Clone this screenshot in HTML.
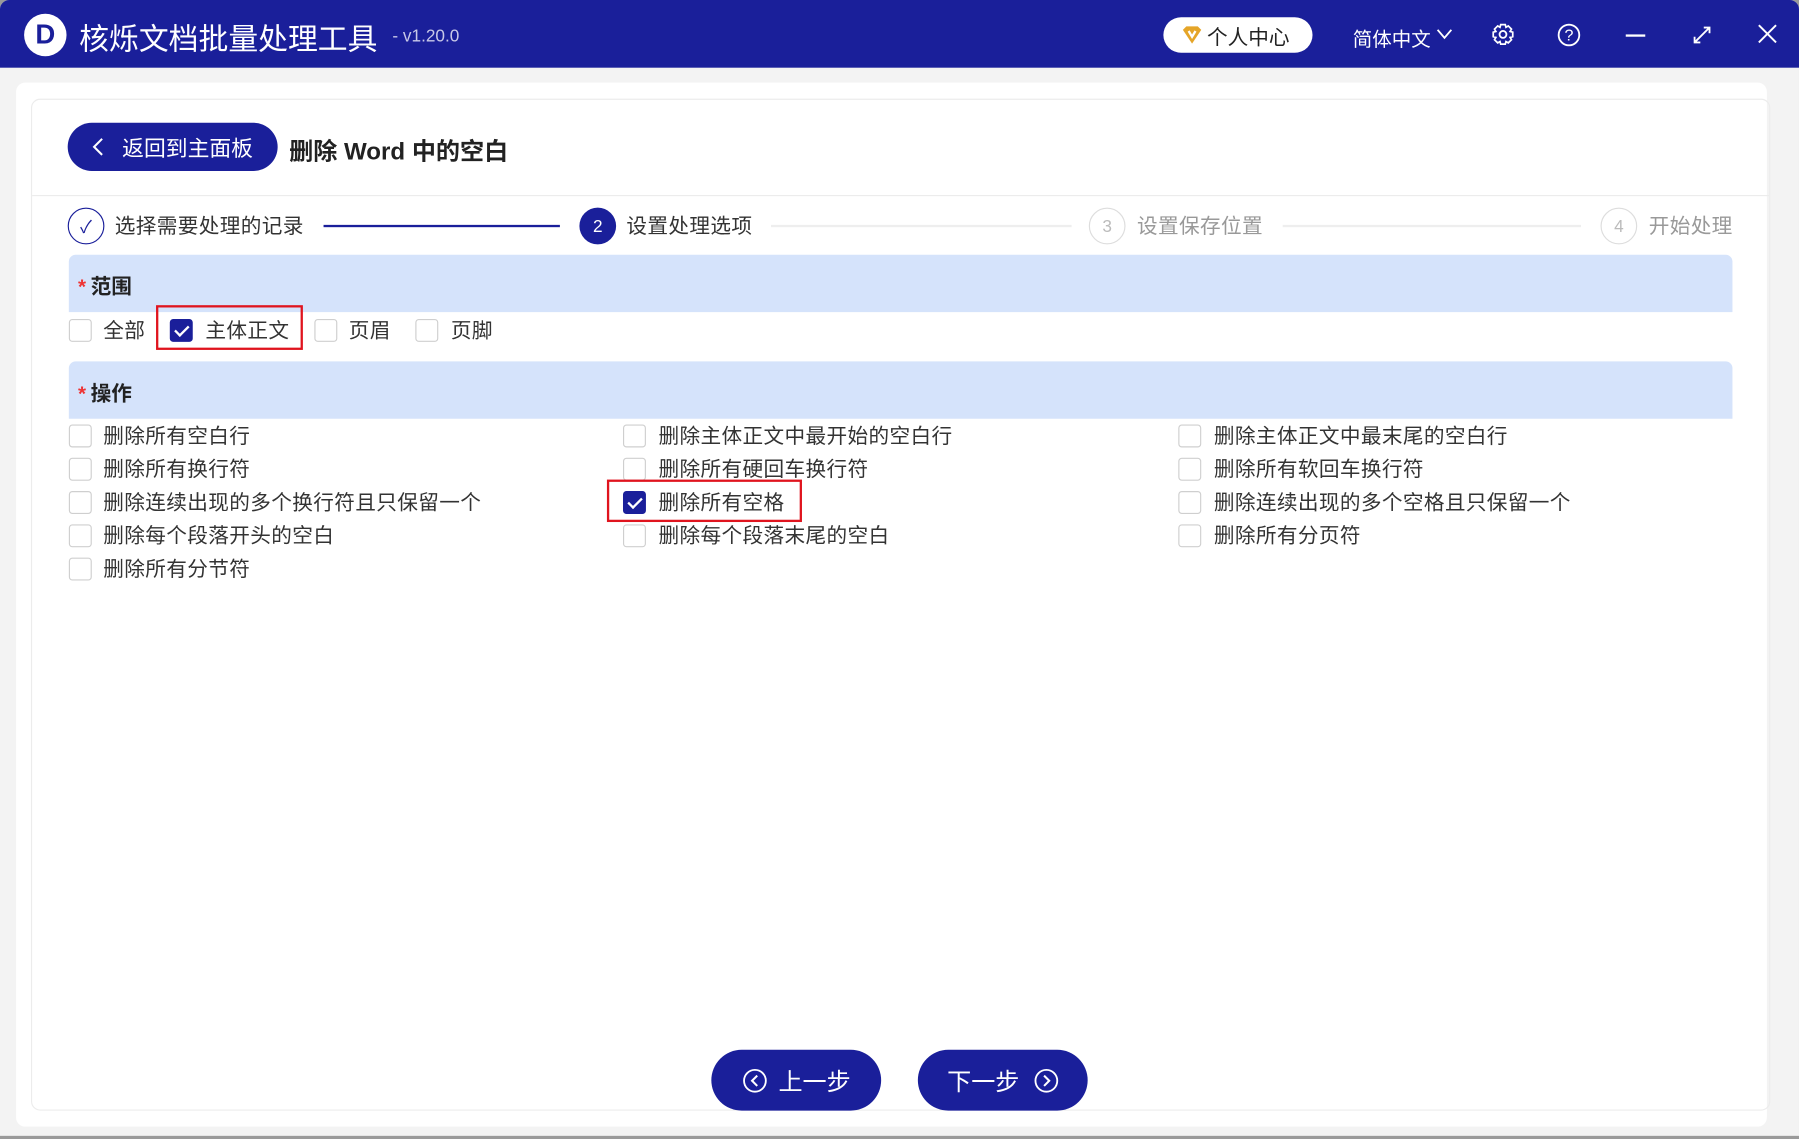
<!DOCTYPE html>
<html><head><meta charset="utf-8"><style>
*{box-sizing:border-box;margin:0;padding:0}
body{width:1799px;height:1139px;overflow:hidden;background:#9a9a9a;font-family:"Liberation Sans","Noto Sans CJK SC",sans-serif}
#w{position:absolute;left:0;top:0;width:1568px;height:993px;transform:scale(1.14732);transform-origin:0 0;background:#f3f3f3;border-radius:8px 8px 0 0;overflow:hidden}
.a{position:absolute}
#tb{left:0;top:0;width:1568px;height:59px;background:#1a1f9a;color:#fff}
.card{left:14px;top:72px;width:1526px;height:910px;background:#fff;border-radius:8px}
.in{left:27px;top:86px;width:1516px;height:882px;border:1px solid #ececec;border-radius:8px}
.cb{position:absolute;width:20px;height:20px;border:1px solid #cfcfcf;border-radius:3px;background:#fff}
.cb.on{background:#1a1f9a;border-color:#1a1f9a}
.cb.on:after{content:"";position:absolute;left:6px;top:2px;width:5px;height:10px;border:solid #fff;border-width:0 2.5px 2.5px 0;transform:rotate(45deg)}
.t{position:absolute;font-size:18px;color:#333;white-space:nowrap;line-height:20px;letter-spacing:0.3px}
.band{left:60px;width:1450px;height:50px;background:#d5e3fb;border-radius:6px 6px 0 0;font-size:18px;font-weight:bold;color:#222;padding:14px 0 0 8px}
.band b{color:#e33;margin-right:4px}
.btn{background:#1a1f9a;color:#fff;border-radius:27px;font-size:21px;display:flex;align-items:center;justify-content:center}
.red{position:absolute;border:2.5px solid #e0141e}
.sc{position:absolute;width:32px;height:32px;border-radius:50%;font-size:15px;display:flex;align-items:center;justify-content:center}
</style></head><body><div id="w">
<div id="tb" class="a">
 <div class="a" style="left:21px;top:12px;width:37px;height:37px;border-radius:50%;background:#fff;color:#1a1f9a;font-weight:bold;font-size:24px;text-align:center;line-height:37px">D</div>
 <div class="a" style="left:69px;top:14px;font-size:26px">核烁文档批量处理工具</div>
 <div class="a" style="left:342px;top:23px;font-size:15px;color:#c8c8e8">- v1.20.0</div>
 <div class="a" style="left:1014px;top:15px;width:130px;height:31px;background:#fff;border-radius:16px;color:#222;font-size:18px;padding:4px 0 0 38px">个人中心</div>
 <svg class="a" style="left:1030px;top:22px" width="18" height="17" viewBox="0 0 18 17"><path d="M1 4 L4 1 H14 L17 4 L9 16 Z" fill="#e5a528"/><path d="M6 5 L9 10 L12 5" stroke="#fff" stroke-width="2" fill="none"/></svg>
 <div class="a" style="left:1179px;top:20px;font-size:17px">简体中文</div>
 <svg class="a" style="left:1252px;top:24px" width="14" height="12"><path d="M1 2 L7 9 L13 2" stroke="#fff" stroke-width="1.6" fill="none"/></svg>
 <svg class="a" style="left:1300px;top:20px" width="20" height="20" viewBox="0 0 20 20"><circle cx="10" cy="10" r="3" stroke="#fff" stroke-width="1.6" fill="none"/><path d="M8 1.5h4l.6 2.3 2-1.2 2.8 2.8-1.2 2 2.3.6v4l-2.3.6 1.2 2-2.8 2.8-2-1.2-.6 2.3H8l-.6-2.3-2 1.2-2.8-2.8 1.2-2-2.3-.6V8l2.3-.6-1.2-2 2.8-2.8 2 1.2Z" stroke="#fff" stroke-width="1.5" fill="none"/></svg>
 <svg class="a" style="left:1357px;top:20px" width="21" height="21"><circle cx="10.5" cy="10.5" r="9" stroke="#fff" stroke-width="1.6" fill="none"/><text x="10.5" y="15.5" font-size="14" fill="#fff" text-anchor="middle" font-family="Liberation Sans">?</text></svg>
 <div class="a" style="left:1417px;top:30px;width:17px;height:2px;background:#fff"></div>
 <svg class="a" style="left:1475px;top:22px" width="17" height="17"><path d="M2 15 L15 2 M10 2 H15 V7 M2 10 V15 H7" stroke="#fff" stroke-width="1.6" fill="none"/></svg>
 <svg class="a" style="left:1532px;top:21px" width="17" height="17"><path d="M1 1 L16 16 M16 1 L1 16" stroke="#fff" stroke-width="1.7"/></svg>
</div>
<div class="a card"></div>
<div class="a in"></div>
<div class="a btn" style="left:59px;top:107px;width:183px;height:42px;font-size:19px"><svg width="12" height="16" style="margin-right:14px"><path d="M9 1 L2 8 L9 15" stroke="#fff" stroke-width="1.8" fill="none"/></svg>返回到主面板</div>
<div class="a" style="left:252px;top:116px;font-size:21px;font-weight:bold;color:#222">删除 Word 中的空白</div>
<div class="a" style="left:28px;top:170px;width:1514px;height:1px;background:#ececec"></div>
<div class="sc" style="left:59px;top:181px;border:1.5px solid #1a1f9a;color:#1a1f9a">✓</div>
<div class="t" style="left:100px;top:187px">选择需要处理的记录</div>
<div class="a" style="left:282px;top:196px;width:206px;height:2px;background:#1a1f9a"></div>
<div class="sc" style="left:505px;top:181px;background:#1a1f9a;color:#fff">2</div>
<div class="t" style="left:546px;top:187px">设置处理选项</div>
<div class="a" style="left:672px;top:196px;width:262px;height:2px;background:#eee"></div>
<div class="sc" style="left:949px;top:181px;border:1.5px solid #ddd;color:#bbb">3</div>
<div class="t" style="left:991px;top:187px;color:#999">设置保存位置</div>
<div class="a" style="left:1118px;top:196px;width:260px;height:2px;background:#eee"></div>
<div class="sc" style="left:1395px;top:181px;border:1.5px solid #ddd;color:#bbb">4</div>
<div class="t" style="left:1437px;top:187px;color:#999">开始处理</div>

<div class="a band" style="top:222px"><b>*</b>范围</div>
<div class="cb" style="left:60px;top:278px"></div><div class="t" style="left:90px;top:278px">全部</div>
<div class="cb on" style="left:148px;top:278px"></div><div class="t" style="left:179px;top:278px">主体正文</div>
<div class="red" style="left:136px;top:266px;width:128px;height:39px"></div>
<div class="cb" style="left:274px;top:278px"></div><div class="t" style="left:304px;top:278px">页眉</div>
<div class="cb" style="left:362px;top:278px"></div><div class="t" style="left:393px;top:278px">页脚</div>

<div class="a band" style="top:315px"><b>*</b>操作</div>
<div class="cb" style="left:60px;top:370px"></div><div class="t" style="left:90px;top:370px">删除所有空白行</div>
<div class="cb" style="left:60px;top:399px"></div><div class="t" style="left:90px;top:399px">删除所有换行符</div>
<div class="cb" style="left:60px;top:428px"></div><div class="t" style="left:90px;top:428px">删除连续出现的多个换行符且只保留一个</div>
<div class="cb" style="left:60px;top:457px"></div><div class="t" style="left:90px;top:457px">删除每个段落开头的空白</div>
<div class="cb" style="left:60px;top:486px"></div><div class="t" style="left:90px;top:486px">删除所有分节符</div>
<div class="cb" style="left:543px;top:370px"></div><div class="t" style="left:574px;top:370px">删除主体正文中最开始的空白行</div>
<div class="cb" style="left:543px;top:399px"></div><div class="t" style="left:574px;top:399px">删除所有硬回车换行符</div>
<div class="cb on" style="left:543px;top:428px"></div><div class="t" style="left:574px;top:428px">删除所有空格</div>
<div class="red" style="left:529px;top:418px;width:170px;height:37px"></div>
<div class="cb" style="left:543px;top:457px"></div><div class="t" style="left:574px;top:457px">删除每个段落末尾的空白</div>
<div class="cb" style="left:1027px;top:370px"></div><div class="t" style="left:1058px;top:370px">删除主体正文中最末尾的空白行</div>
<div class="cb" style="left:1027px;top:399px"></div><div class="t" style="left:1058px;top:399px">删除所有软回车换行符</div>
<div class="cb" style="left:1027px;top:428px"></div><div class="t" style="left:1058px;top:428px">删除连续出现的多个空格且只保留一个</div>
<div class="cb" style="left:1027px;top:457px"></div><div class="t" style="left:1058px;top:457px">删除所有分页符</div>

<div class="a btn" style="left:620px;top:915px;width:148px;height:53px"><svg width="22" height="22" style="margin-right:10px"><circle cx="11" cy="11" r="9.5" stroke="#fff" stroke-width="1.6" fill="none"/><path d="M13 6.5 L8.5 11 L13 15.5" stroke="#fff" stroke-width="1.8" fill="none"/></svg>上一步</div>
<div class="a btn" style="left:800px;top:915px;width:148px;height:53px">下一步<svg width="22" height="22" style="margin-left:12px"><circle cx="11" cy="11" r="9.5" stroke="#fff" stroke-width="1.6" fill="none"/><path d="M9 6.5 L13.5 11 L9 15.5" stroke="#fff" stroke-width="1.8" fill="none"/></svg></div>
<div class="a" style="left:0;top:990px;width:1568px;height:3px;background:#9a9a9a"></div>
</div></body></html>
